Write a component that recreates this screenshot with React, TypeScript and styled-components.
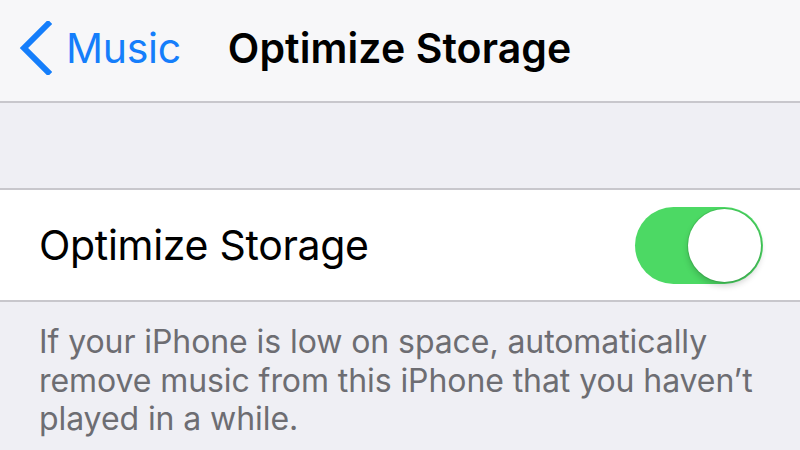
import styled, { createGlobalStyle } from 'styled-components';

const GlobalStyle = createGlobalStyle`
    html, body {
        margin: 0;
        padding: 0;
        background: #efeff4;
    }
    #root {
        width: 800px;
        height: 450px;
        overflow: hidden;
    }
`;

const App = () => {
    return (
        <>
            <GlobalStyle />
            <Screen>
                {/* Navigation bar */}
                <NavBar>
                    <BackButton>
                        <svg width="34" height="54" viewBox="0 0 34 54">
                            <path d="M30 3 L6 27 L30 51" fill="none" stroke="#157efb" strokeWidth="6" strokeLinecap="square" strokeLinejoin="miter" />
                        </svg>
                        <BackLabel>Music</BackLabel>
                    </BackButton>
                    <Title>Optimize Storage</Title>
                </NavBar>

                <SectionGap />

                {/* Setting row */}
                <Group>
                    <Cell>
                        <CellLabel>Optimize Storage</CellLabel>
                        <Switch on>
                            <Knob />
                        </Switch>
                    </Cell>
                </Group>

                <Footer>
                    If your iPhone is low on space, automatically remove music from this iPhone that you haven’t played in a while.
                </Footer>
            </Screen>
        </>
    );
};

const Screen = styled.div`
    display: flex;
    flex-direction: column;
    width: 800px;
    height: 450px;
    background: #efeff4;
    font-family: Inter, "Liberation Sans", sans-serif;
`;

const NavBar = styled.div`
    display: flex;
    align-items: center;
    height: 95px;
    padding: 0 0 6px 18px;
    background: #f7f7f9;
    border-bottom: 2px solid #c8c7cc;
    box-sizing: content-box;
`;

const BackButton = styled.div`
    display: flex;
    align-items: center;
    gap: 14px;
    margin-right: 47px;
`;

const BackLabel = styled.span`
    color: #157efb;
    font-size: 41px;
    letter-spacing: -0.3px;
`;

const Title = styled.span`
    color: #000;
    font-size: 41px;
    font-weight: 600;
    letter-spacing: 0.1px;
`;

const SectionGap = styled.div`
    height: 85px;
`;

const Group = styled.div`
    background: #fff;
    border-top: 2px solid #c8c7cc;
    border-bottom: 2px solid #c8c7cc;
`;

const Cell = styled.div`
    display: flex;
    align-items: center;
    justify-content: space-between;
    height: 110px;
    padding: 0 37px 0 39px;
`;

const CellLabel = styled.span`
    color: #000;
    font-size: 41px;
    letter-spacing: -0.3px;
`;

const Switch = styled.div<{ on?: boolean }>`
    display: flex;
    align-items: center;
    justify-content: ${p => (p.on ? 'flex-end' : 'flex-start')};
    width: 128px;
    height: 77px;
    padding: 2px;
    box-sizing: border-box;
    border-radius: 39px;
    background: ${p => (p.on ? '#4cd964' : '#e5e5ea')};
`;

const Knob = styled.div`
    width: 73px;
    height: 73px;
    border-radius: 50%;
    background: #fff;
    box-shadow: 0 4px 6px rgba(0, 0, 0, 0.18), 0 0 0 1px rgba(0, 60, 0, 0.12);
`;

const Footer = styled.p`
    margin: 0;
    padding: 21px 30px 0 39px;
    color: #6d6d72;
    font-size: 32px;
    line-height: 38.5px;
    letter-spacing: -0.08px;
`;

export default App;
